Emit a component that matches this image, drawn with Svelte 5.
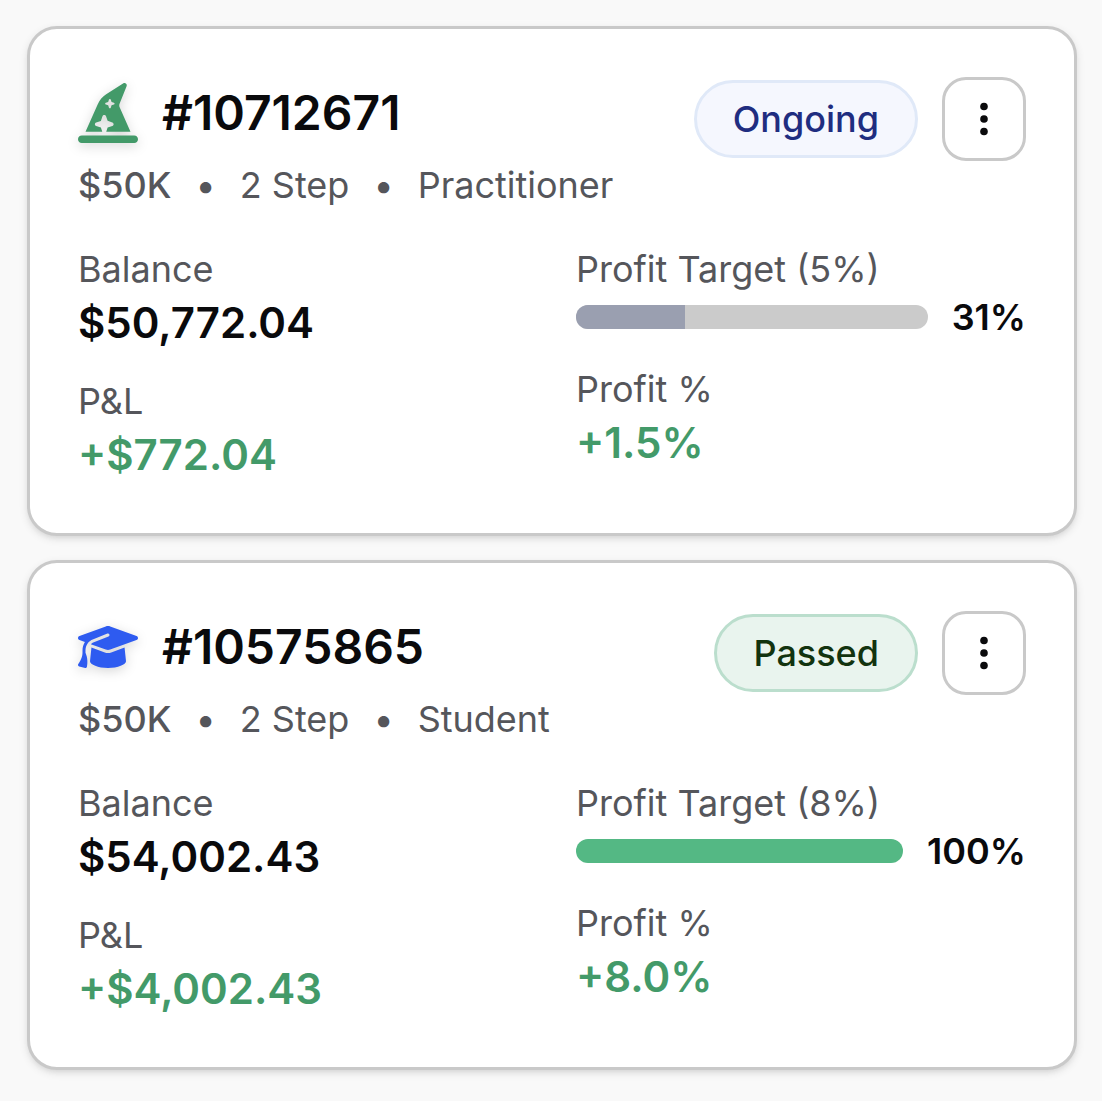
<script lang="ts">
	type Account = {
		id: string;
		size: string;
		steps: string;
		tier: string;
		status: 'ongoing' | 'passed';
		statusLabel: string;
		balance: string;
		pnl: string;
		target: number;
		progress: number;
		profit: string;
	};

	const accounts: Account[] = [
		{
			id: '10712671',
			size: '$50K',
			steps: '2 Step',
			tier: 'Practitioner',
			status: 'ongoing',
			statusLabel: 'Ongoing',
			balance: '$50,772.04',
			pnl: '+$772.04',
			target: 5,
			progress: 31,
			profit: '+1.5%'
		},
		{
			id: '10575865',
			size: '$50K',
			steps: '2 Step',
			tier: 'Student',
			status: 'passed',
			statusLabel: 'Passed',
			balance: '$54,002.43',
			pnl: '+$4,002.43',
			target: 8,
			progress: 100,
			profit: '+8.0%'
		}
	];
</script>

<main class="accounts">
	{#each accounts as account (account.id)}
		<article class="card">
			<header class="card-header">
				<div class="heading">
					<div class="title-row">
						{#if account.tier === 'Practitioner'}
							<svg class="tier-icon practitioner" viewBox="0 0 512 512" aria-hidden="true">
								<path
									d="M64 416L168.6 180.7c15.3-34.4 40.3-63.5 72-83.7l146.9-94c3-1.9 6.5-2.9 10-2.9C407.7 0 416 8.3 416 18.5l0 1.6c0 2.6-.5 5.1-1.4 7.5L354.8 176.9c-1.9 4.7-2.8 9.7-2.8 14.7c0 5.5 1.2 11 3.4 16.1L448 416 240.9 416l11.8-35.4 40.4-13.5c6.5-2.2 10.9-8.3 10.9-15.2s-4.4-13-10.9-15.2l-40.4-13.5-13.5-40.4C237 276.4 230.9 272 224 272s-13 4.4-15.2 10.9l-13.5 40.4-40.4 13.5C148.4 339 144 345.1 144 352s4.4 13 10.9 15.2l40.4 13.5L207.1 416 64 416zM279.6 141.5c-1.1-3.3-4.1-5.5-7.6-5.5s-6.5 2.2-7.6 5.5l-6.7 20.2-20.2 6.7c-3.3 1.1-5.5 4.1-5.5 7.6s2.2 6.5 5.5 7.6l20.2 6.7 6.7 20.2c1.1 3.3 4.1 5.5 7.6 5.5s6.5-2.2 7.6-5.5l6.7-20.2 20.2-6.7c3.3-1.1 5.5-4.1 5.5-7.6s-2.2-6.5-5.5-7.6l-20.2-6.7-6.7-20.2zM32 448l448 0c17.7 0 32 14.3 32 32s-14.3 32-32 32L32 512c-17.7 0-32-14.3-32-32s14.3-32 32-32z"
								/>
							</svg>
						{:else}
							<svg class="tier-icon student" viewBox="0 0 640 512" aria-hidden="true">
								<path
									d="M320 32c-8.1 0-16.1 1.4-23.7 4.1L15.8 137.4C6.3 140.9 0 149.9 0 160s6.3 19.1 15.8 22.6l57.9 20.9C57.3 229.3 48 259.8 48 291.9l0 28.1c0 28.4-10.8 57.7-22.3 80.8c-6.5 13-13.9 25.8-22.5 37.6C0 442.7-.9 448.3 .9 453.4s6 8.9 11.2 10.2l64 16c4.2 1.1 8.7 .3 12.4-2s6.3-6.1 7.1-10.4c8.6-42.8 4.3-81.2-2.1-108.7C90.3 344.3 86 329.8 80 316.5l0-24.6c0-30.2 10.2-58.7 27.9-81.5c12.9-15.5 29.6-28 49.2-35.7l157-61.7c8.2-3.2 17.5 .8 20.7 9s-.8 17.5-9 20.7l-157 61.7c-12.4 4.9-23.3 12.4-32.2 21.6l159.6 57.6c7.6 2.7 15.6 4.1 23.7 4.1s16.1-1.4 23.7-4.1L624.2 182.6c9.5-3.4 15.8-12.5 15.8-22.6s-6.3-19.1-15.8-22.6L343.7 36.1C336.1 33.4 328.1 32 320 32zM128 408c0 35.3 86 72 192 72s192-36.7 192-72L496.7 262.6 354.5 314c-11.1 4-22.8 6-34.5 6s-23.5-2-34.5-6L143.3 262.6 128 408z"
								/>
							</svg>
						{/if}
						<h2>#{account.id}</h2>
					</div>
					<div class="meta">
						<span class="size">{account.size}</span>
						<span>•</span>
						<span>{account.steps}</span>
						<span>•</span>
						<span>{account.tier}</span>
					</div>
				</div>
				<div class="actions">
					<span class="badge {account.status}">{account.statusLabel}</span>
					<button class="menu-button" type="button" aria-label="Account options">
						<svg viewBox="0 0 48 48" aria-hidden="true">
							<circle cx="24" cy="11.5" r="3.8" />
							<circle cx="24" cy="24" r="3.8" />
							<circle cx="24" cy="36.5" r="3.8" />
						</svg>
					</button>
				</div>
			</header>

			<div class="stats">
				<div class="column">
					<div class="stat">
						<div class="label">Balance</div>
						<div class="value">{account.balance}</div>
					</div>
					<div class="stat">
						<div class="label">P&amp;L</div>
						<div class="value gain">{account.pnl}</div>
					</div>
				</div>
				<div class="column">
					<div class="stat">
						<div class="label" id="target-{account.id}">Profit Target ({account.target}%)</div>
						<div class="progress-row">
							<div
								class="progress"
								role="progressbar"
								aria-labelledby="target-{account.id}"
								aria-valuenow={account.progress}
								aria-valuemin="0"
								aria-valuemax="100"
							>
								<div class="progress-fill {account.status}" style="width: {account.progress}%"></div>
							</div>
							<span class="percent">{account.progress}%</span>
						</div>
					</div>
					<div class="stat">
						<div class="label">Profit %</div>
						<div class="value gain">{account.profit}</div>
					</div>
				</div>
			</div>
		</article>
	{/each}
</main>

<style>
	:global(body) {
		background-color: #f9f9f9;
	}

	.accounts {
		display: flex;
		flex-direction: column;
		gap: 24px;
		padding: 26px 25px 31px 27px;
		font-family: Inter, 'Liberation Sans', sans-serif;
		font-size: 36px;
		line-height: 48px;
		color: #0a0a0c;
	}

	.card {
		padding: 48px;
		background-color: #fff;
		border: 3px solid #c9c9c9;
		border-radius: 30px;
		box-shadow:
			0 3px 9px rgba(0, 0, 0, 0.1),
			0 3px 6px -3px rgba(0, 0, 0, 0.1);
	}

	.card-header {
		display: flex;
		justify-content: space-between;
		align-items: flex-start;
		margin-bottom: 36px;
	}

	.heading {
		display: flex;
		flex-direction: column;
		gap: 12px;
	}

	.title-row {
		display: flex;
		align-items: center;
		gap: 24px;
	}

	.tier-icon {
		width: 60px;
		height: 60px;
		overflow: visible;
		filter: drop-shadow(0 3px 6px rgba(0, 0, 0, 0.16));
	}

	.tier-icon.practitioner {
		fill: #439a69;
	}

	.tier-icon.student {
		fill: #2e5bf0;
	}

	h2 {
		margin: 0;
		font-size: 48px;
		font-weight: 600;
		line-height: 72px;
	}

	.meta {
		display: flex;
		gap: 24px;
		color: #55565b;
	}

	.size {
		font-weight: 500;
	}

	.actions {
		display: flex;
		align-items: center;
		gap: 24px;
	}

	.badge {
		padding: 12px 36px;
		border: 3px solid;
		border-radius: 39px;
		font-weight: 500;
	}

	.badge.ongoing {
		color: #1f2d80;
		background-color: #f5f7fe;
		border-color: #e0e9f8;
	}

	.badge.passed {
		color: #12330f;
		background-color: #e9f4ee;
		border-color: #bbdecd;
	}

	.menu-button {
		display: flex;
		align-items: center;
		justify-content: center;
		width: 84px;
		height: 84px;
		padding: 0;
		background-color: #fff;
		border: 3px solid #c9c9c9;
		border-radius: 24px;
		cursor: pointer;
	}

	.menu-button svg {
		width: 48px;
		height: 48px;
		fill: #0a0a0c;
	}

	.stats {
		display: grid;
		grid-template-columns: 1fr 1fr;
		gap: 48px;
	}

	.column {
		display: flex;
		flex-direction: column;
		gap: 24px;
	}

	.label {
		color: #55565b;
	}

	.value {
		font-size: 42px;
		font-weight: 600;
		line-height: 60px;
	}

	.value.gain {
		color: #439a69;
	}

	.progress-row {
		display: flex;
		align-items: center;
		gap: 24px;
	}

	.progress {
		flex: 1;
		height: 24px;
		overflow: hidden;
		background-color: #cbcbcb;
		border-radius: 12px;
	}

	.progress-fill {
		height: 100%;
	}

	.progress-fill.ongoing {
		background-color: #9a9fb0;
	}

	.progress-fill.passed {
		background-color: #54b884;
	}

	.percent {
		font-weight: 600;
	}
</style>
